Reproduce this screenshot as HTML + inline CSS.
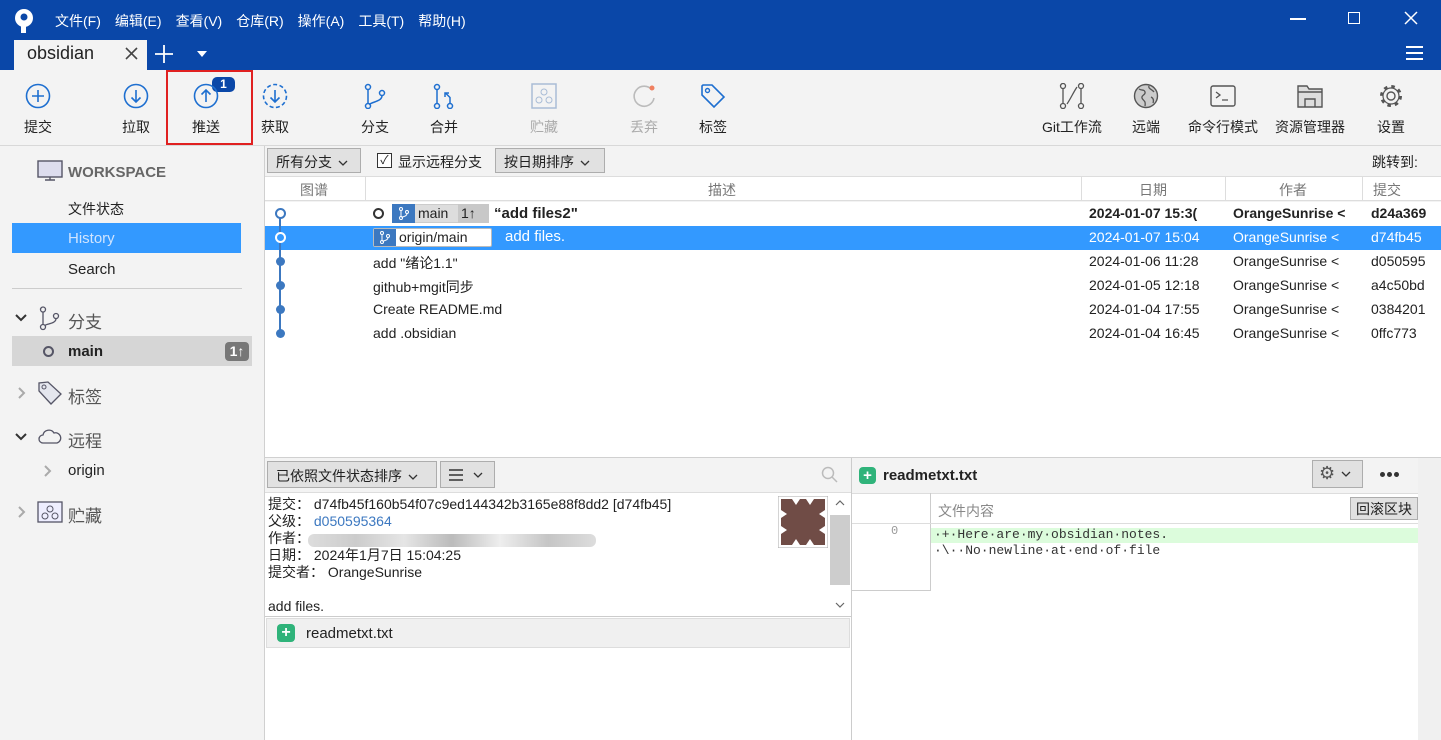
<!DOCTYPE html><html><head><meta charset="utf-8"><style>
*{margin:0;padding:0;box-sizing:border-box}
body{width:1441px;height:740px;overflow:hidden;background:#f3f3f3;font-family:"Liberation Sans","Noto Sans CJK SC",sans-serif;font-size:14px;color:#222;position:relative}
.a{position:absolute;white-space:nowrap}
.menu span{margin-right:14px;color:#fff;font-size:14px}
.tb{position:absolute;top:83px;text-align:center;font-size:14px;color:#222}
.tb svg{display:block;margin:0 auto 8px}
.row{position:absolute;left:265px;width:1176px;height:24px;font-size:14px}
.row span{position:absolute;top:3px}
.btn{position:absolute;background:#e1e1e1;border:1px solid #adadad;font-size:14px;padding:3px 8px}
.cv{display:inline-block;vertical-align:middle;margin-left:6px}
</style></head><body>
<!-- title bar -->
<div class="a" style="left:0;top:0;width:1441px;height:70px;background:#0a47a8"></div>
<svg class="a" style="left:12px;top:8px" width="24" height="26" viewBox="0 0 24 26"><circle cx="12" cy="10" r="9" fill="#fff"/><circle cx="12" cy="9" r="3.5" fill="#0a47a8"/><rect x="9" y="15" width="5" height="10" fill="#fff"/></svg>
<div class="a menu" style="left:55px;top:11px"><span>文件(F)</span><span>编辑(E)</span><span>查看(V)</span><span>仓库(R)</span><span>操作(A)</span><span>工具(T)</span><span>帮助(H)</span></div>
<div class="a" style="left:1290px;top:18px;width:16px;height:1.5px;background:#fff"></div>
<div class="a" style="left:1348px;top:12px;width:12px;height:12px;border:1.5px solid #fff"></div>
<svg class="a" style="left:1404px;top:11px" width="14" height="14"><path d="M1 1l12 12M13 1L1 13" stroke="#fff" stroke-width="1.5"/></svg>
<div class="a" style="left:14px;top:40px;width:133px;height:30px;background:#f3f3f3"></div>
<div class="a" style="left:27px;top:43px;font-size:18px;color:#222">obsidian</div>
<svg class="a" style="left:125px;top:47px" width="13" height="13"><path d="M1 1l11 11M12 1L1 12" stroke="#444" stroke-width="1.6"/></svg>
<svg class="a" style="left:155px;top:45px" width="18" height="18"><path d="M9 0v18M0 9h18" stroke="#fff" stroke-width="1.8"/></svg>
<div class="a" style="left:197px;top:51px;width:0;height:0;border:5px solid transparent;border-top:6px solid #fff"></div>
<div class="a" style="left:1406px;top:46px;width:17px;height:2px;background:#fff;box-shadow:0 6px 0 #fff,0 12px 0 #fff"></div>
<!-- toolbar -->
<div class="a" style="left:166px;top:70px;width:87px;height:75px;border:2px solid #e02020"></div>
<div class="a" style="left:212px;top:77px;width:23px;height:15px;background:#0a47a8;border-radius:5px;color:#fff;font-size:12px;font-weight:bold;text-align:center;line-height:15px">1</div>
<div class="tb" style="left:20px;width:36px"><svg width="26" height="26"><circle cx="13" cy="13" r="11.5" fill="none" stroke="#1e6fd0" stroke-width="1.6"/><path d="M13 7v12M7 13h12" stroke="#1e6fd0" stroke-width="1.6"/></svg>提交</div>
<div class="tb" style="left:118px;width:36px"><svg width="26" height="26"><circle cx="13" cy="13" r="11.5" fill="none" stroke="#1e6fd0" stroke-width="1.6"/><path d="M13 7v12M8.5 14.5l4.5 4.5 4.5-4.5" fill="none" stroke="#1e6fd0" stroke-width="1.6"/></svg>拉取</div>
<div class="tb" style="left:188px;width:36px"><svg width="26" height="26"><circle cx="13" cy="13" r="11.5" fill="none" stroke="#1e6fd0" stroke-width="1.6"/><path d="M13 19V7M8.5 11.5L13 7l4.5 4.5" fill="none" stroke="#1e6fd0" stroke-width="1.6"/></svg>推送</div>
<div class="tb" style="left:257px;width:36px"><svg width="26" height="26"><circle cx="13" cy="13" r="11.5" fill="none" stroke="#1e6fd0" stroke-width="1.6" stroke-dasharray="4 2.5"/><path d="M13 7v12M8.5 14.5l4.5 4.5 4.5-4.5" fill="none" stroke="#1e6fd0" stroke-width="1.6"/></svg>获取</div>
<div class="tb" style="left:357px;width:36px"><svg width="26" height="26"><circle cx="6" cy="4" r="2.5" fill="none" stroke="#1e6fd0" stroke-width="1.5"/><circle cx="6" cy="23" r="2.5" fill="none" stroke="#1e6fd0" stroke-width="1.5"/><circle cx="20" cy="10" r="2.5" fill="none" stroke="#1e6fd0" stroke-width="1.5"/><path d="M6 6.5v14M20 12.5c0 6-9 6-13 9" fill="none" stroke="#1e6fd0" stroke-width="1.5"/></svg>分支</div>
<div class="tb" style="left:426px;width:36px"><svg width="26" height="26"><circle cx="6" cy="4" r="2.5" fill="none" stroke="#1e6fd0" stroke-width="1.5"/><circle cx="6" cy="23" r="2.5" fill="none" stroke="#1e6fd0" stroke-width="1.5"/><circle cx="19" cy="23" r="2.5" fill="none" stroke="#1e6fd0" stroke-width="1.5"/><path d="M6 6.5v14M19 20.5v-6l-4-4M14 14v-4h4" fill="none" stroke="#1e6fd0" stroke-width="1.5"/></svg>合并</div>
<div class="tb" style="left:526px;width:36px;color:#aaa"><svg width="26" height="26"><rect x="1" y="1" width="24" height="24" fill="none" stroke="#a9bcd6" stroke-width="1.5"/><circle cx="13" cy="9" r="3" fill="none" stroke="#a9bcd6"/><circle cx="8" cy="17" r="3" fill="none" stroke="#a9bcd6"/><circle cx="18" cy="17" r="3" fill="none" stroke="#a9bcd6"/></svg>贮藏</div>
<div class="tb" style="left:626px;width:36px;color:#aaa"><svg width="26" height="26"><path d="M21 7A10 10 0 1 0 23 15" fill="none" stroke="#bbb" stroke-width="1.6"/><circle cx="21" cy="5" r="2.5" fill="#f08060"/></svg>丢弃</div>
<div class="tb" style="left:695px;width:36px"><svg width="26" height="26"><path d="M2 3v9l12 12 10-10L12 2H3z" fill="none" stroke="#1e6fd0" stroke-width="1.6"/><circle cx="7.5" cy="7.5" r="2" fill="none" stroke="#1e6fd0" stroke-width="1.4"/></svg>标签</div>
<div class="tb" style="left:1032px;width:80px"><svg width="26" height="26"><circle cx="4" cy="3" r="2.5" fill="none" stroke="#555" stroke-width="1.3"/><circle cx="4" cy="23" r="2.5" fill="none" stroke="#555" stroke-width="1.3"/><circle cx="22" cy="3" r="2.5" fill="none" stroke="#555" stroke-width="1.3"/><circle cx="22" cy="23" r="2.5" fill="none" stroke="#555" stroke-width="1.3"/><path d="M4 5.5v15M22 5.5v15M8 21C12 15 14 10 18 4" fill="none" stroke="#555" stroke-width="1.3"/></svg>Git工作流</div>
<div class="tb" style="left:1128px;width:36px"><svg width="26" height="26"><circle cx="13" cy="13" r="11.5" fill="#ccc" stroke="#555" stroke-width="1.4"/><path d="M6 6c3 2 5 0 6 3s-4 3-3 6 4 2 3 8M16 3c-1 3 3 3 5 6M18 14c2 1 3 3 2 6" fill="none" stroke="#555" stroke-width="1.3"/></svg>远端</div>
<div class="tb" style="left:1185px;width:76px"><svg width="26" height="26"><rect x="1" y="3" width="24" height="20" rx="2" fill="none" stroke="#555" stroke-width="1.4"/><path d="M6 9l4 3-4 3M12 17h6" fill="none" stroke="#555" stroke-width="1.3"/></svg>命令行模式</div>
<div class="tb" style="left:1272px;width:76px"><svg width="26" height="26"><path d="M1 3h9l2 3h13v18H1z" fill="#ddd" stroke="#555" stroke-width="1.4"/><path d="M1 9h24M8 24v-8h10v8" fill="none" stroke="#555" stroke-width="1.4"/></svg>资源管理器</div>
<div class="tb" style="left:1373px;width:36px"><svg width="26" height="26"><circle cx="13" cy="13" r="4" fill="none" stroke="#555" stroke-width="1.4"/><circle cx="13" cy="13" r="9.5" fill="none" stroke="#555" stroke-width="3" stroke-dasharray="3.5 3.96"/><circle cx="13" cy="13" r="8" fill="none" stroke="#555" stroke-width="1.2"/></svg>设置</div>
<div class="a" style="left:0;top:145px;width:1441px;height:1px;background:#d8d8d8"></div>
<!-- sidebar -->
<svg class="a" style="left:37px;top:160px" width="26" height="22"><rect x="1" y="1" width="24" height="16" fill="#dde" stroke="#556" stroke-width="1.4"/><path d="M8 20h10M13 17v3" stroke="#556" stroke-width="1.4"/></svg>
<div class="a" style="left:68px;top:164px;font-size:15px;font-weight:bold;color:#666">WORKSPACE</div>
<div class="a" style="left:68px;top:199px">文件状态</div>
<div class="a" style="left:12px;top:223px;width:229px;height:30px;background:#3399ff"></div>
<div class="a" style="left:68px;top:230px;color:#cfe4ff;font-size:15px">History</div>
<div class="a" style="left:68px;top:261px;font-size:15px">Search</div>
<div class="a" style="left:12px;top:288px;width:230px;height:1px;background:#ccc"></div>
<svg class="a" style="left:15px;top:314px" width="12" height="8"><path d="M1 1l5 5 5-5" fill="none" stroke="#333" stroke-width="2"/></svg>
<svg class="a" style="left:37px;top:306px" width="24" height="25"><circle cx="6" cy="3.5" r="2.5" fill="none" stroke="#556" stroke-width="1.3"/><circle cx="6" cy="21" r="2.5" fill="none" stroke="#556" stroke-width="1.3"/><circle cx="19" cy="10" r="2.5" fill="none" stroke="#556" stroke-width="1.3"/><path d="M6 6v12.5M19 12.5c0 5-8 5-11.5 7" fill="none" stroke="#556" stroke-width="1.3"/></svg>
<div class="a" style="left:68px;top:308px;font-size:17px;color:#555">分支</div>
<div class="a" style="left:12px;top:336px;width:240px;height:30px;background:#d6d6d6"></div>
<div class="a" style="left:43px;top:346px;width:11px;height:11px;border:2.5px solid #556;border-radius:50%"></div>
<div class="a" style="left:68px;top:343px;font-weight:bold;font-size:15px">main</div>
<div class="a" style="left:225px;top:342px;width:24px;height:19px;background:#777;border-radius:4px;color:#fff;font-weight:bold;font-size:14px;text-align:center;line-height:19px">1↑</div>
<svg class="a" style="left:18px;top:387px" width="8" height="12"><path d="M1 1l5 5-5 5" fill="none" stroke="#aaa" stroke-width="2"/></svg>
<svg class="a" style="left:37px;top:380px" width="26" height="26"><path d="M2 3v8l12 13 10-10L11 2z" fill="#e4e6ee" stroke="#556" stroke-width="1.3"/><circle cx="7" cy="7" r="2" fill="none" stroke="#556"/></svg>
<div class="a" style="left:68px;top:383px;font-size:17px;color:#555">标签</div>
<svg class="a" style="left:15px;top:433px" width="12" height="8"><path d="M1 1l5 5 5-5" fill="none" stroke="#333" stroke-width="2"/></svg>
<svg class="a" style="left:38px;top:428px" width="24" height="16"><path d="M5 15a4 4 0 0 1 0-8 6 6 0 0 1 11-2 5 5 0 0 1 3 10z" fill="none" stroke="#556" stroke-width="1.3"/></svg>
<div class="a" style="left:68px;top:427px;font-size:17px;color:#555">远程</div>
<svg class="a" style="left:44px;top:465px" width="8" height="12"><path d="M1 1l5 5-5 5" fill="none" stroke="#aaa" stroke-width="2"/></svg>
<div class="a" style="left:68px;top:462px;font-size:15px">origin</div>
<svg class="a" style="left:18px;top:506px" width="8" height="12"><path d="M1 1l5 5-5 5" fill="none" stroke="#aaa" stroke-width="2"/></svg>
<svg class="a" style="left:37px;top:501px" width="26" height="22"><rect x="1" y="1" width="24" height="20" fill="#eef" stroke="#556" stroke-width="1.3"/><circle cx="13" cy="8" r="3" fill="none" stroke="#556"/><circle cx="8" cy="15" r="3" fill="none" stroke="#556"/><circle cx="18" cy="15" r="3" fill="none" stroke="#556"/></svg>
<div class="a" style="left:68px;top:502px;font-size:17px;color:#555">贮藏</div>
<div class="a" style="left:264px;top:146px;width:1px;height:594px;background:#d0d0d0"></div>
<!-- filter bar -->
<div class="btn" style="left:267px;top:148px;height:25px;width:94px">所有分支<svg class="cv" width="10" height="6"><path d="M1 1l4 4 4-4" fill="none" stroke="#333" stroke-width="1.3"/></svg></div>
<div class="a" style="left:377px;top:153px;width:15px;height:15px;border:1px solid #333;background:#fff;font-size:12px;line-height:13px;text-align:center">✓</div>
<div class="a" style="left:398px;top:152px">显示远程分支</div>
<div class="btn" style="left:495px;top:148px;height:25px;width:110px">按日期排序<svg class="cv" width="10" height="6"><path d="M1 1l4 4 4-4" fill="none" stroke="#333" stroke-width="1.3"/></svg></div>
<div class="a" style="left:1372px;top:152px;font-size:14px">跳转到:</div>
<!-- table -->
<div class="a" style="left:265px;top:176px;width:1176px;height:25px;background:#fff;border-top:1px solid #ddd;border-bottom:1px solid #ddd"></div>
<div class="a" style="left:265px;top:177px;width:1176px;height:24px;color:#777;font-size:14px">
<span class="a" style="left:35px;top:3px">图谱</span><span class="a" style="left:100px;top:0;width:1px;height:24px;background:#ddd"></span>
<span class="a" style="left:443px;top:3px">描述</span><span class="a" style="left:816px;top:0;width:1px;height:24px;background:#ddd"></span>
<span class="a" style="left:874px;top:3px">日期</span><span class="a" style="left:960px;top:0;width:1px;height:24px;background:#ddd"></span>
<span class="a" style="left:1014px;top:3px">作者</span><span class="a" style="left:1097px;top:0;width:1px;height:24px;background:#ddd"></span>
<span class="a" style="left:1108px;top:3px">提交</span></div>
<div class="a" style="left:265px;top:202px;width:1176px;height:256px;background:#fff"></div>
<div class="a" style="left:265px;top:226px;width:1176px;height:24px;background:#3399ff"></div>
<div class="a" style="left:279px;top:214px;width:2px;height:120px;background:#3c78c0"></div>
<div class="a" style="left:275px;top:208px;width:11px;height:11px;border:2px solid #3c78c0;border-radius:50%;background:#fff"></div>
<div class="a" style="left:275px;top:232px;width:11px;height:11px;border:2px solid #fff;border-radius:50%;background:#3399ff"></div>
<div class="a" style="left:276px;top:257px;width:9px;height:9px;border-radius:50%;background:#3c78c0;box-shadow:0 24px 0 #3c78c0,0 48px 0 #3c78c0,0 72px 0 #3c78c0"></div>
<div class="row" style="top:202px;font-weight:bold">
<span style="left:108px;top:6px;width:11px;height:11px;border:2.5px solid #333;border-radius:50%"></span>
<span style="left:127px;top:2px;width:97px;height:19px;background:#ddd;border:1px solid #ccc"></span>
<span style="left:127px;top:2px;width:23px;height:19px;background:#3c78c0"><svg style="position:absolute;left:6px;top:3px" width="12" height="13"><circle cx="3" cy="2" r="1.5" fill="none" stroke="#fff"/><circle cx="3" cy="11" r="1.5" fill="none" stroke="#fff"/><circle cx="9" cy="5" r="1.5" fill="none" stroke="#fff"/><path d="M3 3.5v6M9 6.5c0 3-4 3-5.5 4" fill="none" stroke="#fff"/></svg></span>
<span style="left:153px;font-weight:normal">main</span><span style="left:193px;top:2px;width:31px;height:19px;background:#c8c8c8"></span><span style="left:196px;font-weight:normal">1↑</span>
<span style="left:229px;font-size:15px">“add files2"</span>
<span style="left:824px">2024-01-07 15:3(</span><span style="left:968px">OrangeSunrise &lt;</span><span style="left:1106px">d24a369</span></div>
<div class="row" style="top:226px;color:#fff">
<span style="left:108px;top:2px;width:119px;height:19px;background:#fff;border:1px solid #bbb;border-radius:2px"></span>
<span style="left:109px;top:3px;width:22px;height:17px;background:#3c78c0"><svg style="position:absolute;left:5px;top:2px" width="12" height="13"><circle cx="3" cy="2" r="1.5" fill="none" stroke="#fff"/><circle cx="3" cy="11" r="1.5" fill="none" stroke="#fff"/><circle cx="9" cy="5" r="1.5" fill="none" stroke="#fff"/><path d="M3 3.5v6M9 6.5c0 3-4 3-5.5 4" fill="none" stroke="#fff"/></svg></span>
<span style="left:134px;color:#222">origin/main</span>
<span style="left:240px;font-size:15px;top:2px">add files.</span>
<span style="left:824px">2024-01-07 15:04</span><span style="left:968px">OrangeSunrise &lt;</span><span style="left:1106px">d74fb45</span></div>
<div class="row" style="top:250px"><span style="left:108px">add "绪论1.1"</span><span style="left:824px">2024-01-06 11:28</span><span style="left:968px">OrangeSunrise &lt;</span><span style="left:1106px">d050595</span></div>
<div class="row" style="top:274px"><span style="left:108px">github+mgit同步</span><span style="left:824px">2024-01-05 12:18</span><span style="left:968px">OrangeSunrise &lt;</span><span style="left:1106px">a4c50bd</span></div>
<div class="row" style="top:298px"><span style="left:108px">Create README.md</span><span style="left:824px">2024-01-04 17:55</span><span style="left:968px">OrangeSunrise &lt;</span><span style="left:1106px">0384201</span></div>
<div class="row" style="top:322px"><span style="left:108px">add .obsidian</span><span style="left:824px">2024-01-04 16:45</span><span style="left:968px">OrangeSunrise &lt;</span><span style="left:1106px">0ffc773</span></div>
<!-- bottom left -->
<div class="a" style="left:265px;top:457px;width:1176px;height:1px;background:#d0d0d0"></div>
<div class="btn" style="left:267px;top:461px;height:27px;width:170px;padding-top:4px">已依照文件状态排序<svg class="cv" width="10" height="6"><path d="M1 1l4 4 4-4" fill="none" stroke="#333" stroke-width="1.3"/></svg></div>
<div class="btn" style="left:440px;top:461px;width:55px;height:27px;padding-top:4px"><svg width="14" height="12" style="vertical-align:middle"><path d="M0 1h14M0 6h14M0 11h14" stroke="#333" stroke-width="1.5"/></svg><svg class="cv" width="10" height="6" style="margin-left:10px"><path d="M1 1l4 4 4-4" fill="none" stroke="#333" stroke-width="1.3"/></svg></div>
<svg class="a" style="left:821px;top:466px" width="18" height="18"><circle cx="7" cy="7" r="5.5" fill="none" stroke="#bbb" stroke-width="1.5"/><path d="M11 11l5 5" stroke="#bbb" stroke-width="1.5"/></svg>
<div class="a" style="left:265px;top:492px;width:586px;height:124px;background:#fff;border-top:1px solid #ddd"></div>
<div class="a" style="left:830px;top:515px;width:20px;height:70px;background:#cdcdcd"></div>
<svg class="a" style="left:835px;top:500px" width="10" height="6"><path d="M1 5l4-4 4 4" fill="none" stroke="#666" stroke-width="1.2"/></svg>
<svg class="a" style="left:835px;top:602px" width="10" height="6"><path d="M1 1l4 4 4-4" fill="none" stroke="#666" stroke-width="1.2"/></svg>
<div class="a" style="left:268px;top:496px;line-height:17px;font-size:14px">提交： d74fb45f160b54f07c9ed144342b3165e88f8dd2 [d74fb45]<br>父级： <span style="color:#3c78c0">d050595364</span><br>作者：<br>日期： 2024年1月7日 15:04:25<br>提交者： OrangeSunrise<br><br>add files.</div>
<div class="a" style="left:308px;top:534px;width:288px;height:13px;background:linear-gradient(90deg,#ddd,#ccc,#e5e5e5,#bbb,#eee,#c5c5c5,#ddd);border-radius:6px"></div>
<svg class="a" style="left:778px;top:496px" width="50" height="52"><rect width="50" height="52" fill="#fff" stroke="#aaa"/><rect x="3" y="3" width="44" height="46" fill="#704c46"/><circle cx="25" cy="26" r="14" fill="#704c46"/><path d="M3 14l6 4-6 4zM47 14l-6 4 6 4zM14 3l4 6 4-6zM28 3l4 6 4-6zM14 49l4-6 4 6zM28 49l4-6 4 6zM3 30l6 4-6 4zM47 30l-6 4 6 4z" fill="#fff"/></svg>
<div class="a" style="left:265px;top:616px;width:586px;height:124px;background:#fff;border-top:1px solid #ccc"></div>
<div class="a" style="left:266px;top:618px;width:584px;height:30px;background:#f0f0f0;border:1px solid #ddd"></div>
<div class="a" style="left:277px;top:624px;width:18px;height:18px;background:#2fb37a;border-radius:4px;color:#fff;font-weight:bold;text-align:center;line-height:18px;font-size:16px">+</div>
<div class="a" style="left:306px;top:625px;font-size:15px">readmetxt.txt</div>
<!-- bottom right -->
<div class="a" style="left:851px;top:458px;width:1px;height:282px;background:#ccc"></div>
<div class="a" style="left:859px;top:467px;width:17px;height:17px;background:#2fb37a;border-radius:4px;color:#fff;font-weight:bold;text-align:center;line-height:17px;font-size:15px">+</div>
<div class="a" style="left:883px;top:467px;font-weight:bold;font-size:15px">readmetxt.txt</div>
<div class="btn" style="left:1312px;top:460px;width:51px;height:28px;padding:2px 6px;font-size:18px;color:#555">⚙<svg class="cv" width="10" height="6"><path d="M1 1l4 4 4-4" fill="none" stroke="#333" stroke-width="1.3"/></svg></div>
<div class="a" style="left:1380px;top:472px;width:5px;height:5px;border-radius:50%;background:#333;box-shadow:7px 0 0 #333,14px 0 0 #333"></div>
<div class="a" style="left:852px;top:493px;width:566px;height:247px;background:#fff;border-top:1px solid #ddd"></div>
<div class="a" style="left:1418px;top:458px;width:23px;height:282px;background:#f0f0f0"></div>
<div class="a" style="left:930px;top:493px;width:1px;height:98px;background:#ccc"></div>
<div class="a" style="left:852px;top:590px;width:79px;height:1px;background:#ccc"></div>
<div class="a" style="left:852px;top:523px;width:566px;height:1px;background:#ddd"></div>
<div class="a" style="left:938px;top:501px;color:#888">文件内容</div>
<div class="btn" style="left:1350px;top:497px;height:23px;padding:1px 5px;font-size:14px">回滚区块</div>
<div class="a" style="left:931px;top:528px;width:487px;height:15px;background:#dcfcdc"></div>
<div class="a" style="left:891px;top:524px;font-family:'Liberation Mono',monospace;font-size:12px;color:#999">0</div>
<div class="a" style="left:934px;top:527px;font-family:'Liberation Mono',monospace;font-size:13px;line-height:16px;color:#333">·+·Here·are·my·obsidian·notes.<br>·\··No·newline·at·end·of·file</div>
</body></html>
